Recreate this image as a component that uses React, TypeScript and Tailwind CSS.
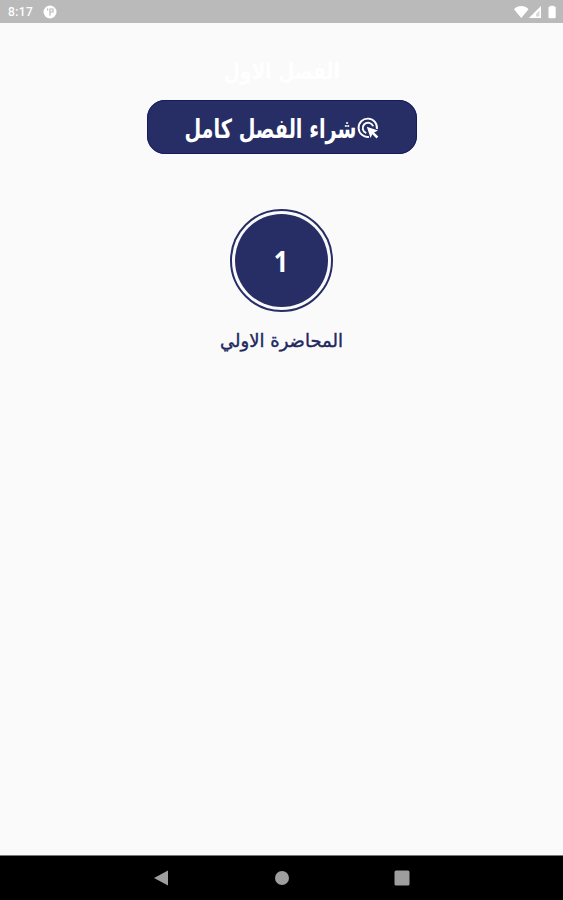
const ARABIC = "font-['DejaVu_Sans',sans-serif]";

function StatusBar() {
  return (
    <header className="flex h-[23px] shrink-0 items-center bg-[#bababa] pr-[7px] pl-2 text-white">
      <span className="font-[Roboto,sans-serif] text-[12px] leading-none font-medium tracking-[0.4px]">
        8:17
      </span>
      <svg viewBox="0 0 14 14" className="ml-[10px] size-[14px]" aria-hidden>
        <circle cx="7" cy="7" r="6.5" fill="#fff" />
        <path d="M4.600 3.500v2M7 10.500V4h3v3H7" fill="none" stroke="#bababa" strokeWidth="1.200" />
      </svg>
      <div className="ml-auto flex items-center">
        <svg viewBox="0 0 42 14" className="h-[14px] w-[42px]" fill="#fff" aria-hidden>
          <path d="M0 4.2C4-.2 10.500-.2 14.500 4.200L7.250 13Z" />
          <path d="M27 1v12H15Z" fillOpacity=".45" />
          <path d="M27 1v12H15ZM25.500 5.500l-3.500 3.500v2.500h3.500Z" fillRule="evenodd" />
          <path d="M36.500 1.500V.7h3.200v.8h1q1 0 1 1v9.800q0 1-1 1h-5.200q-1 0-1-1V2.500q0-1 1-1Z" />
        </svg>
      </div>
    </header>
  );
}

function TapIcon() {
  return (
    <svg viewBox="0 0 22 22" className="mt-[2px] size-[22px] shrink-0" fill="none" stroke="#fff" strokeWidth="1.900" aria-hidden>
      <path d="M12 19.900A9.200 9.200 0 1 1 19.900 12" />
      <path d="M9.300 16.200A5.400 5.400 0 1 1 16.200 9.300" />
      <path d="m9.800 9.800 11.200 3.700-3.900 1.900 4.200 4.200-1.800 1.800-4.200-4.200-1.800 3.800Z" fill="#fff" stroke="none" />
    </svg>
  );
}

function NavBar() {
  return (
    <nav className="flex h-[45px] shrink-0 items-center justify-center border-t border-[#777] bg-black text-[#9e9e9e]">
      <svg viewBox="0 0 256 16" className="h-4 w-[256px]" fill="currentColor" aria-hidden>
        <path d="M0 8 14 .5v15Z" />
        <circle cx="128" cy="8" r="7" />
        <rect x="240.500" y=".5" width="15" height="15" rx="1.500" />
      </svg>
    </nav>
  );
}

export default function App() {
  return (
    <div className="flex h-[900px] w-[563px] flex-col overflow-hidden bg-[#fafafa]">
      <StatusBar />
      <main className="flex flex-1 flex-col items-center">
        <h1
          dir="rtl"
          className={`mt-[25px] mb-[6px] flex h-[46px] scale-x-[0.81] items-center text-[23px] font-bold text-white ${ARABIC}`}
        >
          الفصل الاول
        </h1>

        <button
          dir="rtl"
          className="flex h-[54px] w-[270px] items-center rounded-[18px] bg-[#272e65] pr-[38px] text-white outline-1 -outline-offset-1 outline-[#161b60]"
        >
          <TapIcon />
          <span
            className={`mt-[3px] origin-right scale-x-[0.77] scale-y-[1.06] text-[25px] leading-none font-bold whitespace-nowrap ${ARABIC}`}
          >
            شراء الفصل كامل
          </span>
        </button>

        {/* lecture badge: thin outer ring around a solid disc */}
        <div className="mt-[55px] flex size-[103px] items-center justify-center rounded-full border-2 border-[#272e65]">
          <div className="flex size-[93px] items-center justify-center rounded-full bg-[#272e65] pt-px font-['Noto_Sans',sans-serif] text-[28px] leading-none font-bold text-white">
            <span className="scale-x-90">1</span>
          </div>
        </div>

        <p
          dir="rtl"
          className={`mt-[13px] flex h-[30px] items-center text-[18px] whitespace-nowrap text-[#22285f] [-webkit-text-stroke:0.4px_#22285f] ${ARABIC}`}
        >
          المحاضرة الاولي
        </p>
      </main>
      <NavBar />
    </div>
  );
}
